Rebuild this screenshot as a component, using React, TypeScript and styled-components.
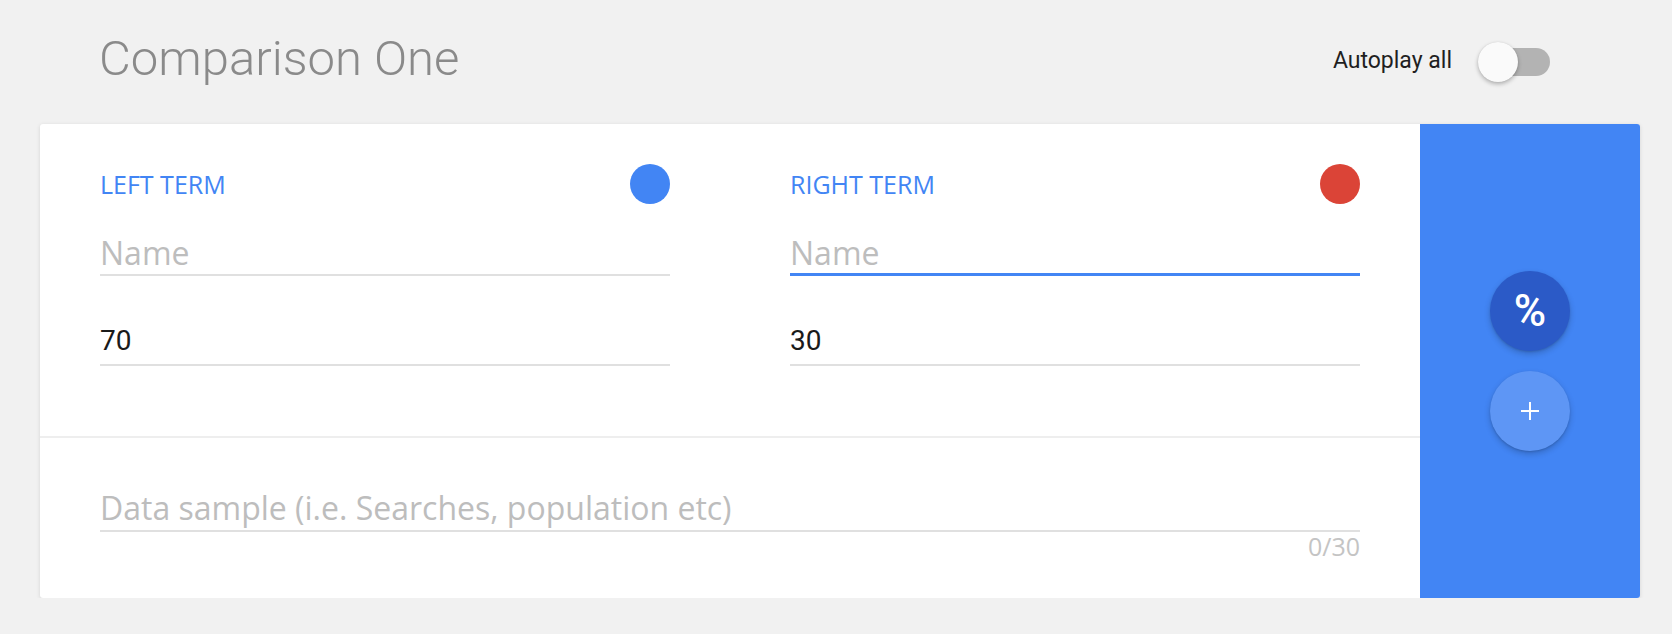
import React from "react";
import styled, { createGlobalStyle } from "styled-components";

const GlobalStyle = createGlobalStyle`
  html, body {
    margin: 0;
    padding: 0;
    background: #f1f1f1;
  }
  body {
    font-family: Roboto, "Open Sans", sans-serif;
  }
  * { box-sizing: border-box; }
`;

const Page = styled.div`
  width: 1640px;
  padding-left: 40px;
`;

const Header = styled.header`
  height: 124px;
  display: flex;
  align-items: center;
  justify-content: space-between;
  padding: 0 90px 0 59px;
`;

const Title = styled.h1`
  margin: 0 0 6px 0;
  font-family: Roboto, sans-serif;
  font-weight: 300;
  font-size: 49px;
  line-height: 48px;
  color: #8a8a8a;
`;

const Autoplay = styled.label`
  display: flex;
  align-items: center;
  gap: 26px;
`;

const AutoplayText = styled.span`
  font-family: Roboto, sans-serif;
  font-size: 23px;
  line-height: 23px;
  color: #1f1f1f;
  margin-bottom: 3px;
`;

const Switch = styled.span`
  position: relative;
  display: block;
  width: 72px;
  height: 40px;
`;

const Track = styled.span`
  position: absolute;
  left: 8px;
  top: 6px;
  width: 64px;
  height: 28px;
  border-radius: 14px;
  background: #b3b3b3;
`;

const Thumb = styled.span`
  position: absolute;
  left: 0;
  top: 0;
  width: 40px;
  height: 40px;
  border-radius: 50%;
  background: #fafafa;
  box-shadow: 0 2px 4px rgba(0, 0, 0, 0.28), 0 0 1px rgba(0, 0, 0, 0.12);
`;

const Card = styled.section`
  width: 1600px;
  height: 474px;
  display: flex;
  background: #fff;
  border-radius: 3px;
  overflow: hidden;
  box-shadow: 0 1px 4px rgba(0, 0, 0, 0.12);
`;

const Main = styled.div`
  flex: 1;
  display: flex;
  flex-direction: column;
`;

const Terms = styled.div`
  display: grid;
  grid-template-columns: 1fr 1fr;
  border-bottom: 2px solid #eeeeee;
`;

const Term = styled.div`
  padding: 40px 60px 70px;
  display: flex;
  flex-direction: column;
`;

const LabelRow = styled.div`
  height: 40px;
  display: flex;
  align-items: center;
  justify-content: space-between;
`;

const Label = styled.span`
  font-family: "Open Sans", sans-serif;
  font-weight: 500;
  font-size: 25px;
  line-height: 40px;
  color: #4285f4;
`;

const Dot = styled.span<{ $color: string }>`
  width: 40px;
  height: 40px;
  border-radius: 50%;
  background: ${(p) => p.$color};
`;

const NameInput = styled.input<{ $focused?: boolean }>`
  display: block;
  width: 100%;
  margin: 28px 0 0;
  height: 44px;
  padding: 0 0 ${(p) => (p.$focused ? 1 : 2)}px;
  border: none;
  border-bottom: ${(p) => (p.$focused ? "3px solid #4285f4" : "2px solid #e0e0e0")};
  outline: none;
  background: transparent;
  font-family: "Open Sans", sans-serif;
  font-size: 32px;
  line-height: 40px;
  color: #212121;
  &::placeholder {
    color: #bdbdbd;
  }
`;

const NumberInput = styled.input`
  display: block;
  width: 100%;
  margin: 44px 0 0;
  height: 46px;
  padding: 0 0 4px;
  border: none;
  border-bottom: 2px solid #e0e0e0;
  outline: none;
  background: transparent;
  font-family: Roboto, sans-serif;
  font-size: 28px;
  line-height: 40px;
  color: #1a1a1a;
`;

const Sample = styled.div`
  flex: 1;
  padding: 49px 60px 0;
  display: flex;
  flex-direction: column;
`;

const SampleInput = styled.input`
  display: block;
  width: 100%;
  height: 45px;
  padding: 0 0 3px;
  margin: 0;
  border: none;
  border-bottom: 2px solid #e0e0e0;
  outline: none;
  background: transparent;
  font-family: "Open Sans", sans-serif;
  font-size: 32px;
  line-height: 40px;
  color: #212121;
  &::placeholder {
    color: #bdbdbd;
  }
`;

const Counter = styled.span`
  align-self: flex-end;
  margin-top: 2px;
  font-family: "Open Sans", sans-serif;
  font-size: 25px;
  line-height: 25px;
  color: #c4c4c4;
`;

const Side = styled.aside`
  width: 220px;
  background: #4285f4;
  display: flex;
  flex-direction: column;
  align-items: center;
  justify-content: center;
  gap: 20px;
`;

const Fab = styled.button<{ $tone: "dark" | "light" }>`
  width: 80px;
  height: 80px;
  border-radius: 50%;
  border: none;
  padding: 0;
  display: flex;
  align-items: center;
  justify-content: center;
  background: ${(p) => (p.$tone === "dark" ? "#2b5ac7" : "#5e96f5")};
  box-shadow: 0 3px 6px rgba(0, 0, 0, 0.2), 0 1px 2px rgba(0, 0, 0, 0.12);
  color: #fff;
  font-family: Roboto, sans-serif;
  font-weight: 500;
  font-size: 44px;
  line-height: 1;
  cursor: pointer;
`;

const terms = [
  { label: "LEFT TERM", color: "#4285f4", value: "70", focused: false },
  { label: "RIGHT TERM", color: "#db4437", value: "30", focused: true },
];

export default function App() {
  return (
    <>
      <GlobalStyle />
      <Page>
        <Header>
          <Title>Comparison One</Title>
          <Autoplay>
            <AutoplayText>Autoplay all</AutoplayText>
            <Switch>
              <Track />
              <Thumb />
            </Switch>
          </Autoplay>
        </Header>
        <Card>
          <Main>
            <Terms>
              {terms.map((t) => (
                <Term key={t.label}>
                  <LabelRow>
                    <Label>{t.label}</Label>
                    <Dot $color={t.color} />
                  </LabelRow>
                  <NameInput placeholder="Name" $focused={t.focused} />
                  <NumberInput defaultValue={t.value} />
                </Term>
              ))}
            </Terms>
            <Sample>
              <SampleInput placeholder="Data sample (i.e. Searches, population etc)" />
              <Counter>0/30</Counter>
            </Sample>
          </Main>
          <Side>
            <Fab $tone="dark">%</Fab>
            <Fab $tone="light">
              <svg width="18" height="18" viewBox="0 0 18 18">
                <path d="M9 0v18M0 9h18" stroke="#fff" strokeWidth="2" />
              </svg>
            </Fab>
          </Side>
        </Card>
      </Page>
    </>
  );
}
